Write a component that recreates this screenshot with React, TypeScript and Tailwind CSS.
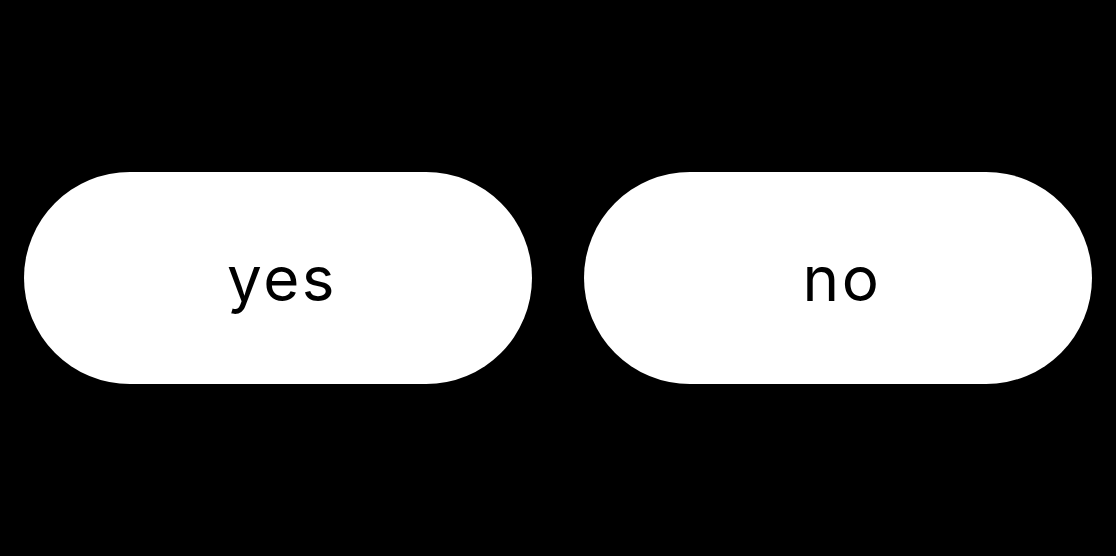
const options = ["yes", "no"];

export default function App() {
  return (
    <div className="flex h-[556px] w-full items-center justify-center gap-[52px] bg-black px-6">
      {options.map((label) => (
        <button
          key={label}
          className="flex h-[212px] w-[508px] items-center justify-center rounded-full bg-white pl-[8px] text-[62px] font-normal tracking-[0.04em] text-black"
          style={{ fontFamily: "Inter, 'Noto Sans', sans-serif" }}
        >
          {label}
        </button>
      ))}
    </div>
  );
}
